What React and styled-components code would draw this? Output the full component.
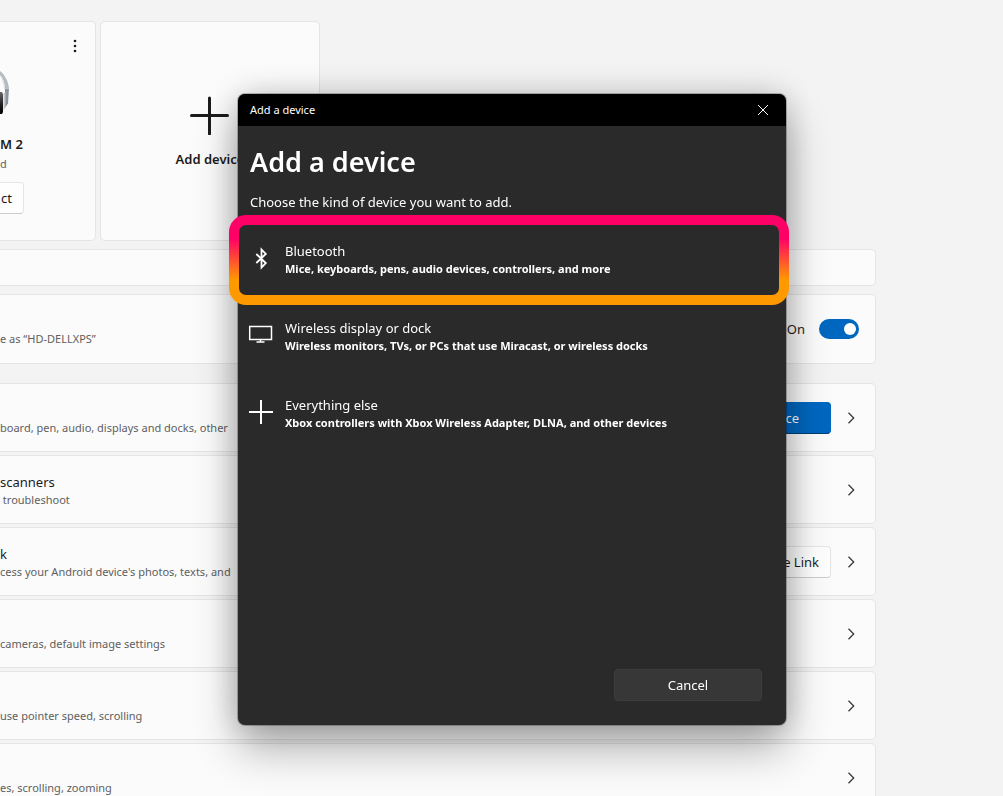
import React, { useState } from 'react';
import styled, { createGlobalStyle, css } from 'styled-components';

const GlobalStyle = createGlobalStyle`
  * {
    box-sizing: border-box;
  }

  body {
    margin: 0;
    overflow: hidden;
    background: #f3f3f3;
    color: #1b1b1b;
    font-family: 'Noto Sans', 'Open Sans', sans-serif;
    font-size: 13px;
    line-height: 20px;
  }

  button,
  input {
    font: inherit;
    color: inherit;
  }

  h1, h2, h3, p, ul {
    margin: 0;
    padding: 0;
    font-weight: 400;
  }
`;

const Page = styled.main`
  height: 100vh;
  overflow: hidden;
  padding: 21px 127px 0 0;
`;

const DeviceCards = styled.section`
  display: flex;
  gap: 4px;
  margin-bottom: 8px;
`;

const card = css`
  background: #fbfbfb;
  border: 1px solid #e5e5e5;
  border-radius: 5px;
`;

const flushLeft = css`
  border-left: none;
  border-top-left-radius: 0;
  border-bottom-left-radius: 0;
`;

const PairedCard = styled.article`
  ${card}
  ${flushLeft}
  width: 96px;
  height: 220px;
  display: flex;
  flex-direction: column;
  align-items: flex-start;
`;

const MoreButton = styled.button`
  align-self: flex-end;
  width: 32px;
  height: 32px;
  margin: 8px 4px 0 0;
  padding: 0;
  display: grid;
  place-items: center;
  background: none;
  border: none;
`;

const Headphones = styled.svg`
  display: block;
  width: 12px;
  height: 48px;
  margin-top: 4px;
`;

const DeviceName = styled.h3`
  margin-top: 20px;
  font-size: 13px;
  font-weight: 600;
  line-height: 20px;
`;

const DeviceState = styled.p`
  color: #5f5f5f;
  font-size: 11px;
  line-height: 20px;
`;

const ConnectButton = styled.button`
  width: 24px;
  height: 32px;
  margin-top: 8px;
  padding: 0 11px 0 0;
  display: flex;
  align-items: center;
  justify-content: flex-end;
  background: #fefefe;
  border: 1px solid #e5e5e5;
  border-bottom-color: #cccccc;
  border-radius: 0 4px 4px 0;
  border-left: none;
`;

const AddCard = styled.button`
  ${card}
  width: 220px;
  height: 220px;
  padding: 2px 0 0;
  display: flex;
  flex-direction: column;
  align-items: center;
  justify-content: center;
  gap: 14px;
  font-weight: 600;

  svg {
    display: block;
  }
`;

const Rows = styled.section`
  display: flex;
  flex-direction: column;
  gap: ${({ $gap }) => $gap}px;
  margin-bottom: 19px;
`;

const Row = styled.div`
  ${card}
  ${flushLeft}
  min-height: ${({ $height }) => $height || 69}px;
  padding-right: 16px;
  display: flex;
  align-items: center;
  justify-content: space-between;
`;

const RowTitle = styled.h3`
  min-height: 20px;
  font-size: 13px;
  line-height: 20px;
`;

const RowNote = styled.p`
  color: #606060;
  font-size: 11px;
  line-height: 16px;
  white-space: pre;
`;

const RowActions = styled.div`
  display: flex;
  align-items: center;
  gap: 12px;
`;

const RowButton = styled.button`
  height: 32px;
  padding: 0 11px;
  min-width: ${({ $primary }) => ($primary ? 130 : 120)}px;
  border-radius: 4px;
  border: 1px solid ${({ $primary }) => ($primary ? '#0067c0' : '#e5e5e5')};
  border-bottom-color: ${({ $primary }) => ($primary ? '#003e73' : '#cccccc')};
  background: ${({ $primary }) => ($primary ? '#0067c0' : '#fefefe')};
  color: ${({ $primary }) => ($primary ? '#ffffff' : '#1b1b1b')};
`;

const OpenButton = styled.button`
  width: 16px;
  height: 32px;
  padding: 0;
  display: grid;
  place-items: center;
  border: none;
  background: none;
`;

const ToggleLabel = styled.label`
  display: flex;
  align-items: center;
  gap: 14px;
`;

const Toggle = styled.input`
  appearance: none;
  width: 40px;
  height: 20px;
  margin: 0;
  padding: 4px 3px;
  display: flex;
  justify-content: ${({ checked }) => (checked ? 'flex-end' : 'flex-start')};
  border-radius: 10px;
  background: ${({ checked }) => (checked ? '#0067c0' : '#8a8a8a')};

  &::before {
    content: '';
    width: 12px;
    height: 12px;
    border-radius: 50%;
    background: #ffffff;
  }
`;

const Overlay = styled.div`
  position: fixed;
  inset: 0;
  display: flex;
  align-items: flex-start;
  justify-content: center;
  padding: 94px 0 0 21px;
`;

const Dialog = styled.section`
  width: 548px;
  min-height: 631px;
  display: flex;
  flex-direction: column;
  border-radius: 7px;
  background: #2a2a2a;
  color: #ffffff;
  box-shadow:
    0 0 0 1px rgba(0, 0, 0, 0.25),
    0 0 32px rgba(0, 0, 0, 0.2),
    0 24px 44px rgba(0, 0, 0, 0.3);
`;

const TitleBar = styled.header`
  height: 32px;
  padding: 0 7px 0 12px;
  display: flex;
  align-items: center;
  justify-content: space-between;
  border-radius: 7px 7px 0 0;
  background: #000000;
  font-size: 11px;
`;

const CloseButton = styled.button`
  width: 32px;
  height: 32px;
  padding: 0;
  display: grid;
  place-items: center;
  border: none;
  background: none;
`;

const Intro = styled.div`
  padding: 18px 12px 13px;
`;

const Heading = styled.h1`
  margin-bottom: 12px;
  font-size: 27px;
  font-weight: 600;
  line-height: 36px;
`;

const Options = styled.ul`
  flex: 1;
  padding: 0 7px 0 1px;
  display: flex;
  flex-direction: column;
  gap: 7px;
  list-style: none;
`;

const Option = styled.button`
  position: relative;
  width: 100%;
  min-height: 70px;
  padding: 0 10px 2px;
  display: flex;
  align-items: center;
  gap: 12px;
  border: none;
  background: none;
  text-align: left;

  ${({ $highlighted }) =>
    $highlighted &&
    css`
      &::before {
        content: '';
        position: absolute;
        inset: -10px;
        border: 10px solid transparent;
        border-radius: 17px;
        background:
          linear-gradient(#2a2a2a, #2a2a2a) padding-box,
          linear-gradient(#ff0066 26%, #ff9900 72%) border-box;
      }
    `}
`;

const OptionIcon = styled.svg`
  position: relative;
  flex: none;
  width: 24px;
  height: 24px;
  overflow: visible;
  fill: none;
  stroke: #ffffff;
`;

const OptionText = styled.span`
  position: relative;
  display: flex;
  flex-direction: column;
`;

const OptionName = styled.span`
  font-size: 13px;
  line-height: 20px;
`;

const OptionNote = styled.span`
  font-size: 11px;
  font-weight: 700;
  line-height: 16px;
`;

const Footer = styled.footer`
  display: flex;
  justify-content: flex-end;
  padding: 24px;
`;

const CancelButton = styled.button`
  width: 148px;
  height: 32px;
  padding: 0;
  border: 1px solid #3d3d3d;
  border-radius: 4px;
  background: #373737;
`;

const settings = [
  { note: 'board, pen, audio, displays and docks, other', action: 'Add device', primary: true },
  { title: 'scanners', note: ' troubleshoot' },
  { title: 'k', note: 'cess your Android device\'s photos, texts, and', action: 'Open Phone Link' },
  { note: 'cameras, default image settings' },
  { note: 'use pointer speed, scrolling' },
  { note: 'es, scrolling, zooming' },
];

const options = [
  {
    name: 'Bluetooth',
    note: 'Mice, keyboards, pens, audio devices, controllers, and more',
    highlighted: true,
    icon: <path d="M7.300 7l9.500 9-4.300 4.500v-18L16.800 7 7.300 16" strokeWidth="1.8" />,
  },
  {
    name: 'Wireless display or dock',
    note: 'Wireless monitors, TVs, or PCs that use Miracast, or wireless docks',
    icon: <path d="M0.700 2.500h21.800v13H0.700zM11.500 15.500v2.500M7.500 18h8" strokeWidth="1.5" />,
  },
  {
    name: 'Everything else',
    note: 'Xbox controllers with Xbox Wireless Adapter, DLNA, and other devices',
    icon: <path d="M0 11h24M12-1v24" strokeWidth="2" />,
  },
];

function Chevron() {
  return (
    <svg width="16" height="16" viewBox="0 0 16 16" fill="none" stroke="#3a3a3a" strokeWidth="1.3">
      <path d="M5.500 2.800l5.200 5.200-5.200 5.200" />
    </svg>
  );
}

function AddDeviceDialog({ onClose }) {
  return (
    <Overlay>
      <Dialog role="dialog" aria-labelledby="dialog-heading">
        <TitleBar>
          <span>Add a device</span>
          <CloseButton aria-label="Close" onClick={onClose}>
            <svg width="12" height="12" viewBox="0 0 12 12" stroke="#ffffff" strokeWidth="1">
              <path d="M1 1l10 10M11 1L1 11" />
            </svg>
          </CloseButton>
        </TitleBar>
        <Intro>
          <Heading id="dialog-heading">Add a device</Heading>
          <p>Choose the kind of device you want to add.</p>
        </Intro>
        <Options>
          {options.map((option) => (
            <li key={option.name}>
              <Option $highlighted={option.highlighted}>
                <OptionIcon viewBox="0 0 24 24">{option.icon}</OptionIcon>
                <OptionText>
                  <OptionName>{option.name}</OptionName>
                  <OptionNote>{option.note}</OptionNote>
                </OptionText>
              </Option>
            </li>
          ))}
        </Options>
        <Footer>
          <CancelButton onClick={onClose}>Cancel</CancelButton>
        </Footer>
      </Dialog>
    </Overlay>
  );
}

function App() {
  const [bluetoothOn, setBluetoothOn] = useState(true);
  const [dialogOpen, setDialogOpen] = useState(true);

  return (
    <>
      <GlobalStyle />
      <Page>
        <DeviceCards>
          <PairedCard>
            <MoreButton aria-label="More options">
              <svg width="4" height="14" viewBox="0 0 4 14" fill="#1b1b1b">
                <circle cx="2" cy="2" r="1.3" />
                <circle cx="2" cy="7" r="1.3" />
                <circle cx="2" cy="12" r="1.3" />
              </svg>
            </MoreButton>
            <Headphones viewBox="0 0 12 48">
              <defs>
                <linearGradient id="cup" x1="0" y1="0" x2="0" y2="1">
                  <stop offset="0" stopColor="#6a6a6a" />
                  <stop offset="0.6" stopColor="#1c1c1c" />
                  <stop offset="1" stopColor="#000000" />
                </linearGradient>
              </defs>
              <path d="M0 5C5 9 8 15 9 22H5C4.500 17 3 12 0 9z" fill="#b4bcc3" />
              <path d="M0 9c3 4 4.500 9 4.500 14" fill="none" stroke="#d9dde1" />
              <path d="M5 22.500h4l-1 15-3.500 5z" fill="#8b939b" />
              <path d="M3.500 28v16l2-3V26z" fill="#c3c9cf" />
              <path d="M0 26h2l1 2v18l-1 2H0z" fill="url(#cup)" />
            </Headphones>
            <DeviceName>M 2</DeviceName>
            <DeviceState>d</DeviceState>
            <ConnectButton>ct</ConnectButton>
          </PairedCard>
          <AddCard onClick={() => setDialogOpen(true)}>
            <svg width="40" height="40" viewBox="0 0 40 40" stroke="#1b1b1b" strokeWidth="3" strokeLinecap="round">
              <path d="M1.500 20.500h36M19.500 3v36" />
            </svg>
            Add device
          </AddCard>
        </DeviceCards>

        <Rows $gap={8}>
          <Row $height={37} />
          <Row $height={70}>
            <div>
              <RowTitle />
              <RowNote>e as “HD-DELLXPS”</RowNote>
            </div>
            <ToggleLabel>
              On
              <Toggle
                type="checkbox"
                checked={bluetoothOn}
                onChange={(e) => setBluetoothOn(e.target.checked)}
              />
            </ToggleLabel>
          </Row>
        </Rows>

        <Rows $gap={3}>
          {settings.map((item) => (
            <Row key={item.note}>
              <div>
                <RowTitle>{item.title}</RowTitle>
                <RowNote>{item.note}</RowNote>
              </div>
              <RowActions>
                {item.action && <RowButton $primary={item.primary}>{item.action}</RowButton>}
                <OpenButton aria-label="Open">
                  <Chevron />
                </OpenButton>
              </RowActions>
            </Row>
          ))}
        </Rows>
      </Page>
      {dialogOpen && <AddDeviceDialog onClose={() => setDialogOpen(false)} />}
    </>
  );
}

export default App;
